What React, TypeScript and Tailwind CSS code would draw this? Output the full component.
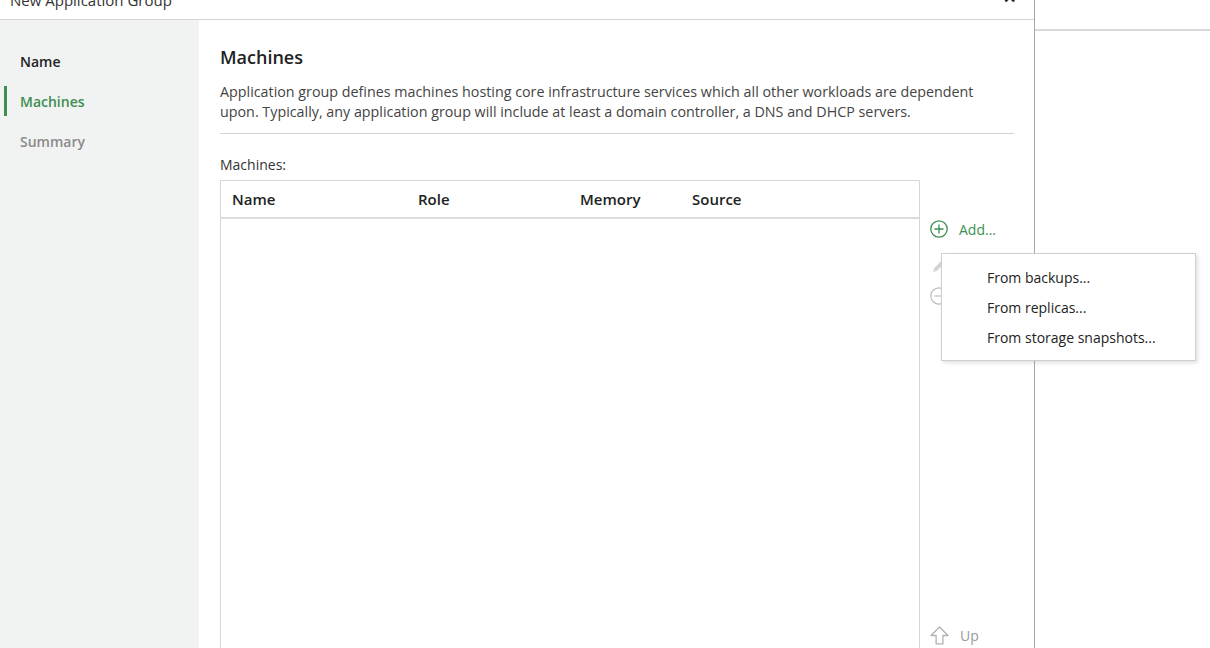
import React from "react";

const font = { fontFamily: '"Open Sans", "Noto Sans", sans-serif' };

function PlusCircle() {
  return (
    <svg width="18" height="18" viewBox="0 0 18 18" fill="none" stroke="#3e8e50" strokeWidth="1.3">
      <circle cx="9" cy="9" r="8.2" />
      <path d="M9 4.5v9M4.5 9h9" />
    </svg>
  );
}

function Pencil() {
  return (
    <svg width="16" height="16" viewBox="0 0 16 16" fill="#d4d4d4">
      <path d="M2 14l1.2-4L11 2.2l2.8 2.8L6 12.8z" />
    </svg>
  );
}

function MinusCircle() {
  return (
    <svg width="18" height="18" viewBox="0 0 18 18" fill="none" stroke="#bdbdbd" strokeWidth="1.2">
      <circle cx="9" cy="9" r="8.2" />
      <path d="M4.5 9h9" />
    </svg>
  );
}

function UpArrow() {
  return (
    <svg width="19" height="19" viewBox="0 0 18 18" fill="none" stroke="#b0b0b0" strokeWidth="1.2" strokeLinejoin="round">
      <path d="M9 1L1 9h4.8v8h6.4V9H17z" />
    </svg>
  );
}

export default function App() {
  return (
    <div className="relative flex h-[648px] w-[1210px] overflow-hidden bg-white text-[#333]" style={font}>
      {/* wizard dialog */}
      <div className="flex w-[1035px] flex-col border-r border-[#a6a6a6]">
        <div className="flex h-[20px] shrink-0 items-start justify-between overflow-hidden border-b border-[#d4d4d4] pl-[10px] pr-[18px]">
          <span className="mt-[-10px] text-[15px] leading-[20px] text-[#333]">New Application Group</span>
          <span className="mt-[-13px] text-[16px] font-bold leading-[20px] text-[#222]">✕</span>
        </div>
        <div className="flex flex-1">
          <nav className="flex w-[199px] flex-col bg-[#f1f2f2] pt-[21px] text-[14px]">
            <div className="flex h-[40px] items-center pl-[20px] font-semibold text-[#222]">Name</div>
            <div className="relative flex h-[40px] items-center pl-[20px] font-semibold text-[#3e8e50]">
              <span className="absolute left-[4px] top-[5px] h-[30px] w-[3px] bg-[#3e8e50]" />
              Machines
            </div>
            <div className="flex h-[40px] items-center pl-[20px] font-semibold text-[#8a8a8a]">Summary</div>
          </nav>
          <main className="flex flex-1 flex-col pl-[21px] pr-[20px] pt-[24px]">
            <h1 className="text-[18px] font-semibold leading-[26px] text-[#222]">Machines</h1>
            <p className="mt-[12px] text-[14.3px] leading-[20px] text-[#444]">
              Application group defines machines hosting core infrastructure services which all other workloads are dependent
              <br />
              upon. Typically, any application group will include at least a domain controller, a DNS and DHCP servers.
            </p>
            <div className="mt-[11px] h-px bg-[#d4d4d4]" />
            <div className="mt-[21px] text-[14px] leading-[20px] text-[#333]">Machines:</div>
            <div className="mt-[5px] flex flex-1">
              <div className="flex w-[700px] flex-col border-x border-t border-[#d6d6d6]">
                <div className="flex h-[38px] items-center border-b-2 border-[#dcdcdc] text-[15px] font-semibold text-[#222]">
                  <span className="w-[197px] pl-[11px]">Name</span>
                  <span className="w-[162px]">Role</span>
                  <span className="w-[112px]">Memory</span>
                  <span>Source</span>
                </div>
                <div className="flex-1" />
              </div>
              <div className="flex flex-1 flex-col pl-[10px] pt-[39px] text-[14px]">
                <div className="flex h-[20px] items-center gap-[11px] text-[#3e8e50]">
                  <PlusCircle />
                  <span>Add...</span>
                </div>
                <div className="mt-[17px] flex h-[20px] items-center pl-[1px]">
                  <Pencil />
                </div>
                <div className="mt-[10px] flex h-[20px] items-center">
                  <MinusCircle />
                </div>
                <div className="flex-1" />
                <div className="mb-[3px] flex h-[20px] items-center gap-[11px] text-[#9a9a9a]">
                  <UpArrow />
                  <span>Up</span>
                </div>
              </div>
            </div>
          </main>
        </div>
      </div>
      {/* neighbouring window */}
      <div className="flex flex-1 flex-col">
        <div className="h-[31px] border-b-2 border-[#d9d9d9]" />
      </div>
      {/* add menu */}
      <div className="absolute left-[941px] top-[253px] w-[255px] border border-[#cfcfcf] bg-white py-[8px] text-[14px] text-[#222] shadow-[2px_2px_4px_rgba(0,0,0,0.12)]">
        <div className="flex h-[30px] items-center pl-[45px]">From backups...</div>
        <div className="flex h-[30px] items-center pl-[45px]">From replicas...</div>
        <div className="flex h-[30px] items-center pl-[45px]">From storage snapshots...</div>
      </div>
    </div>
  );
}
